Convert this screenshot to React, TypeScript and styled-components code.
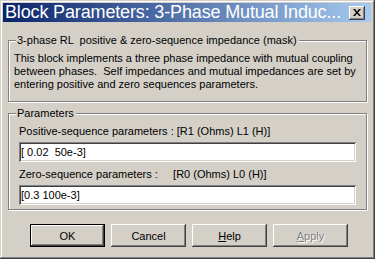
import * as React from "react";
import styled, { createGlobalStyle } from "styled-components";

const GlobalStyle = createGlobalStyle`
  html, body {
    margin: 0;
    padding: 0;
    background: #d4d0c8;
  }
  body {
    font-family: "Liberation Sans", Arial, sans-serif;
    font-size: 11px;
    color: #000;
  }
`;

const buttons = [
  { label: "OK", isDefault: true },
  { label: "Cancel" },
  { label: "Help", mnemonic: "H" },
  { label: "Apply", mnemonic: "A", disabled: true },
];

const App: React.FC = () => {
  return (
    <>
      <GlobalStyle />
      <Window>
        <TitleBar>
          <TitleText>Block Parameters: 3-Phase Mutual Induc...</TitleText>
          <CloseButton aria-label="Close">
            <svg width="8" height="7" viewBox="0 0 8 7">
              <path d="M0 0h2l2 2.5L6 0h2L5 3.5 8 7H6L4 4.5 2 7H0l3-3.5z" fill="#000" />
            </svg>
          </CloseButton>
        </TitleBar>

        <Group $top={18}>
          <Legend>3-phase RL  positive &amp; zero-sequence impedance (mask)</Legend>
          <Description>
            This block implements a three phase impedance with mutual coupling
            <br />
            between phases.  Self impedances and mutual impedances are set by
            <br />
            entering positive and zero sequences parameters.
          </Description>
        </Group>

        <Group $top={11}>
          <Legend>Parameters</Legend>
          <Fields>
            <Label>Positive-sequence parameters : [R1 (Ohms) L1 (H)]</Label>
            <Field readOnly value="[ 0.02  50e-3]" />
            <Label $gap>Zero-sequence parameters :     [R0 (Ohms) L0 (H)]</Label>
            <Field readOnly value="[0.3 100e-3]" />
          </Fields>
        </Group>

        <ButtonRow>
          {buttons.map((b) => (
            <Button key={b.label} $default={b.isDefault} disabled={b.disabled}>
              <ButtonLabel $disabled={b.disabled}>
                {b.mnemonic ? (
                  <>
                    <u>{b.mnemonic}</u>
                    {b.label.slice(1)}
                  </>
                ) : (
                  b.label
                )}
              </ButtonLabel>
            </Button>
          ))}
        </ButtonRow>
      </Window>
    </>
  );
};

export default App;

const Window = styled.div`
  box-sizing: border-box;
  width: 375px;
  height: 259px;
  padding: 3px 4px 4px 3px;
  background: #d4d0c8;
  box-shadow: inset -1px -1px #404040, inset 1px 1px #d4d0c8,
    inset -2px -2px #808080, inset 2px 2px #ffffff;
  display: flex;
  flex-direction: column;
`;

const TitleBar = styled.div`
  height: 19px;
  display: flex;
  align-items: center;
  justify-content: space-between;
  padding: 0 6px 0 2px;
  background: linear-gradient(to right, #0a246a, #a6caf0);
`;

const TitleText = styled.span`
  color: #fff;
  font-size: 18px;
  line-height: 19px;
  white-space: nowrap;
  letter-spacing: -0.15px;
`;

const CloseButton = styled.div`
  box-sizing: border-box;
  width: 16px;
  height: 14px;
  display: flex;
  align-items: center;
  justify-content: center;
  background: #d4d0c8;
  box-shadow: inset -1px -1px #404040, inset 1px 1px #ffffff,
    inset -2px -2px #808080;
`;

const Group = styled.div<{ $top: number }>`
  position: relative;
  margin: ${(p) => p.$top}px 4px 0 5px;
  border: 1px solid #808080;
  box-shadow: inset 1px 1px #ffffff, 1px 1px #ffffff;
`;

const Legend = styled.span`
  position: absolute;
  top: -7px;
  left: 7px;
  padding: 0 2px 0 1px;
  background: #d4d0c8;
  line-height: 13px;
  white-space: pre;
`;

const Description = styled.div`
  padding: 11px 4px 10px 5px;
  line-height: 13px;
  white-space: pre;
`;

const Fields = styled.div`
  display: flex;
  flex-direction: column;
  padding: 11px 10px 4px 10px;
`;

const Label = styled.div<{ $gap?: boolean }>`
  line-height: 13px;
  white-space: pre;
  margin-top: ${(p) => (p.$gap ? 6 : 0)}px;
  margin-bottom: 4px;
`;

const Field = styled.input`
  box-sizing: border-box;
  width: 100%;
  height: 20px;
  margin: 0;
  padding: 0 2px;
  border: none;
  outline: none;
  background: #fff;
  font-family: "Liberation Sans", Arial, sans-serif;
  font-size: 11px;
  color: #000;
  white-space: pre;
  box-shadow: inset 1px 1px #808080, inset -1px -1px #ffffff,
    inset 2px 2px #404040, inset -2px -2px #d4d0c8;
`;

const ButtonRow = styled.div`
  display: flex;
  justify-content: center;
  gap: 6px;
  margin-top: 14px;
  padding-left: 4px;
`;

const Button = styled.button<{ $default?: boolean }>`
  box-sizing: border-box;
  width: 75px;
  height: 23px;
  margin: 0;
  padding: 0;
  border: ${(p) => (p.$default ? "1px solid #000" : "none")};
  background: #d4d0c8;
  font-family: "Liberation Sans", Arial, sans-serif;
  font-size: 11px;
  color: #000;
  box-shadow: inset -1px -1px #404040, inset 1px 1px #ffffff,
    inset -2px -2px #808080;
`;

const ButtonLabel = styled.span<{ $disabled?: boolean }>`
  color: ${(p) => (p.$disabled ? "#808080" : "#000")};
  text-shadow: ${(p) => (p.$disabled ? "1px 1px #ffffff" : "none")};
`;
